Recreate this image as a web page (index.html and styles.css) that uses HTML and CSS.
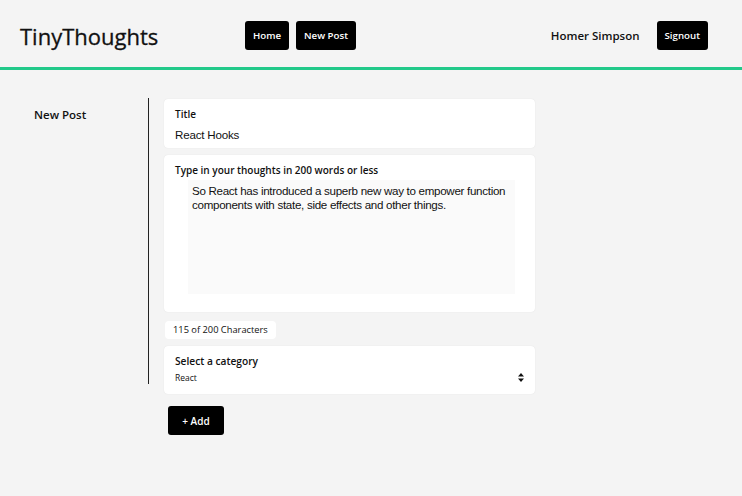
FILE: index.html
```html
<!DOCTYPE html>
<html>
<head>
<meta charset="utf-8">
<link rel="stylesheet" href="styles.css">
</head>
<body>
<header class="header">
  <div class="logo">TinyThoughts</div>
  <nav class="nav">
    <button class="btn">Home</button>
    <button class="btn">New Post</button>
  </nav>
  <div class="user">
    <span class="username">Homer Simpson</span>
    <button class="btn">Signout</button>
  </div>
</header>
<main class="main">
  <aside class="sidebar">
    <div class="side-title">New Post</div>
  </aside>
  <section class="form">
    <div class="card card-title">
      <div class="label">Title</div>
      <div class="value">React Hooks</div>
    </div>
    <div class="card card-thoughts">
      <div class="label">Type in your thoughts in 200 words or less</div>
      <div class="textarea">So React has introduced a superb new way to empower function components with state, side effects and other things.</div>
    </div>
    <div class="counter">115 of 200 Characters</div>
    <div class="card card-cat">
      <div class="label label-lg">Select a category</div>
      <div class="select">
        <span>React</span>
        <svg class="arrows" width="6" height="9" viewBox="0 0 6 9"><path d="M3 0 L6 3.5 H0 Z M0 5.5 H6 L3 9 Z" fill="#111"/></svg>
      </div>
    </div>
    <button class="btn btn-add">+ Add</button>
  </section>
</main>
</body>
</html>
```
FILE: styles.css
```css
* { box-sizing: border-box; }
html, body { margin: 0; padding: 0; }
body {
  background: #f4f4f4;
  font-family: "Open Sans", sans-serif;
  color: #111;
  width: 742px;
  height: 496px;
  overflow: hidden;
}
.header {
  height: 70px;
  border-bottom: 3px solid #22c98a;
  display: flex;
  align-items: center;
  padding: 4px 34px 0 20px;
}
.logo {
  font-size: 22px;
  font-weight: 500;
  width: 225px;
  -webkit-text-stroke: 0.3px #111;
}
.nav { display: flex; gap: 7px; }
.user { margin-left: auto; display: flex; align-items: center; gap: 17px; }
.username { font-size: 11.5px; font-weight: 600; }
.btn {
  background: #000;
  color: #fff;
  border: none;
  border-radius: 3px;
  height: 29px;
  padding: 0 8px;
  font-family: "Open Sans", sans-serif;
  font-size: 9.7px;
  font-weight: 600;
}
.main {
  display: flex;
  padding-top: 28px;
}
.sidebar {
  width: 149px;
  height: 286px;
  border-right: 1px solid #222;
  padding-left: 34px;
  padding-top: 9px;
}
.side-title { font-size: 11.5px; font-weight: 600; }
.form {
  margin-left: 15px;
  width: 371px;
  display: flex;
  flex-direction: column;
}
.card {
  background: #fff;
  border-radius: 4px;
  box-shadow: 0 0 1px rgba(0,0,0,0.12);
  padding: 8px 11px 9px;
}
.label { font-size: 10px; font-weight: 600; line-height: 15px; }
.label-lg { font-size: 10.2px; }
.value {
  font-family: "Liberation Sans", Arial, sans-serif;
  font-size: 11.6px;
  letter-spacing: -0.2px;
  margin-top: 5px;
  line-height: 15px;
}
.card-title { height: 49px; margin-top: 1px; }
.card-thoughts { margin-top: 7px; height: 157px; }
.textarea {
  margin: 2px 9px 0 13px;
  background: #fafafa;
  height: 114px;
  padding: 4px 2px 4px 4px;
  font-family: "Liberation Sans", Arial, sans-serif;
  font-size: 11.6px;
  letter-spacing: -0.3px;
  line-height: 14px;
}
.counter {
  align-self: flex-start;
  margin-top: 9px;
  margin-left: 1px;
  background: #fff;
  border-radius: 4px;
  font-size: 9.3px;
  line-height: 18px;
  padding: 0 8px;
}
.card-cat { margin-top: 7px; height: 48px; }
.select {
  display: flex;
  align-items: center;
  justify-content: space-between;
  font-size: 8.5px;
  margin-top: 3px;
}
.btn-add {
  align-self: flex-start;
  margin-top: 12px;
  margin-left: 4px;
  width: 56px;
  font-size: 10px;
}
```
